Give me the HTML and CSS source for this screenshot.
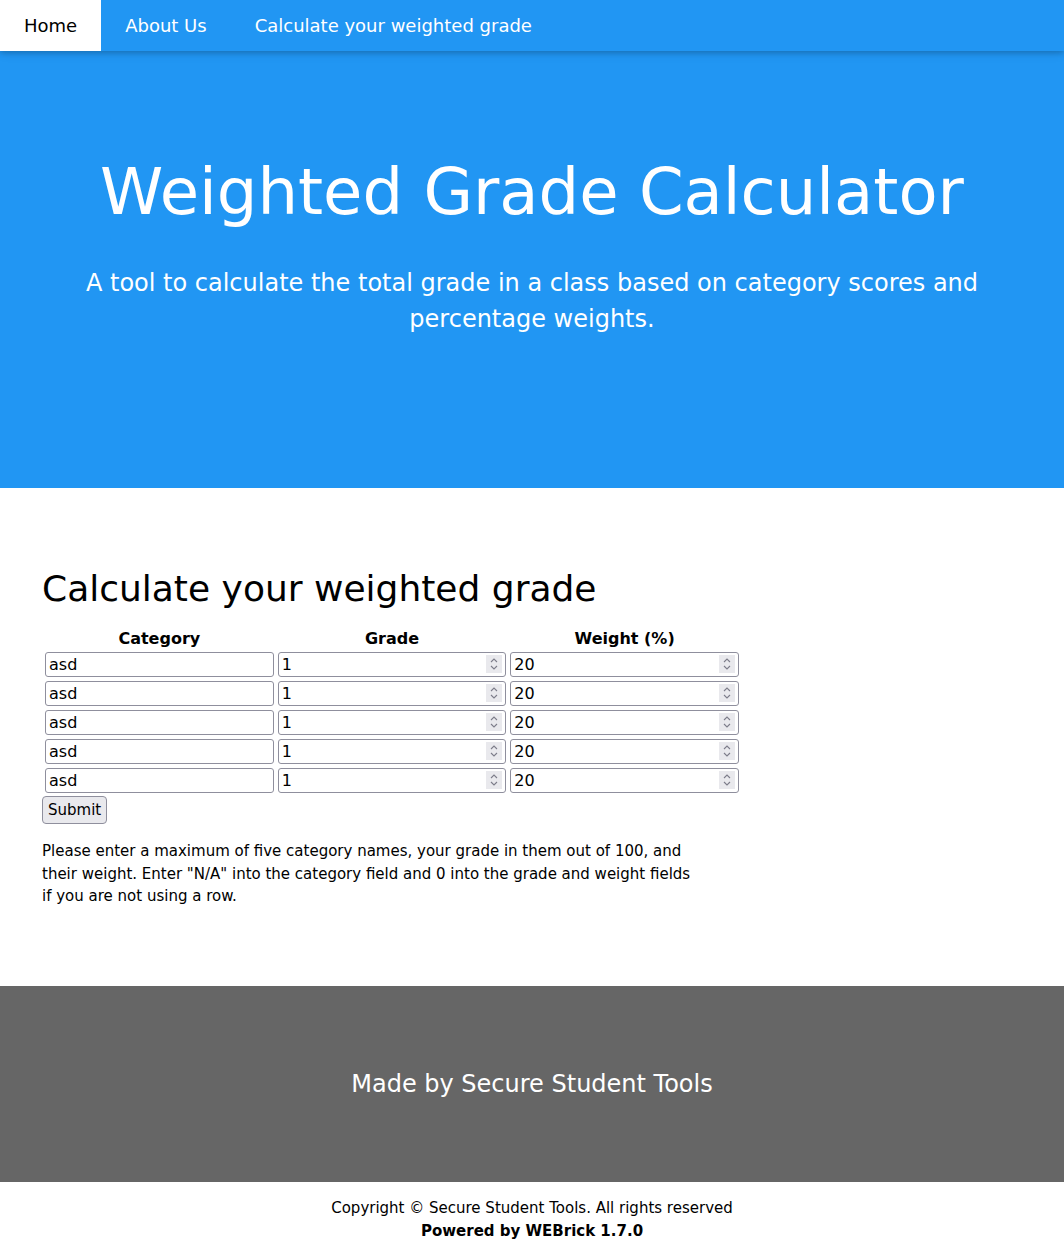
FILE: index.html
```html
<!DOCTYPE html>
<html lang="en">
<head>
<meta charset="utf-8">
<title>Weighted Grade Calculator</title>
<link rel="stylesheet" href="styles.css">
</head>
<body>
<nav class="topbar">
  <a class="nav-item active" href="#">Home</a>
  <a class="nav-item" href="#">About Us</a>
  <a class="nav-item" href="#">Calculate your weighted grade</a>
</nav>
<header class="hero">
  <h1 class="hero-title">Weighted Grade Calculator</h1>
  <p class="hero-sub">A tool to calculate the total grade in a class based on category scores and percentage weights.</p>
</header>
<main class="content">
  <h1 class="section-title">Calculate your weighted grade</h1>
  <form class="grade-form">
    <table class="grade-table">
      <thead>
        <tr><th>Category</th><th>Grade</th><th>Weight (%)</th></tr>
      </thead>
      <tbody>
        <tr>
          <td><input class="field" type="text" value="asd"></td>
          <td class="num"><input class="field" type="number" value="1"><span class="spin"><svg width="16" height="18" viewBox="0 0 16 18"><path d="M5 7 L8 4 L11 7 M5 11 L8 14 L11 11"/></svg></span></td>
          <td class="num"><input class="field" type="number" value="20"><span class="spin"><svg width="16" height="18" viewBox="0 0 16 18"><path d="M5 7 L8 4 L11 7 M5 11 L8 14 L11 11"/></svg></span></td>
        </tr>
        <tr>
          <td><input class="field" type="text" value="asd"></td>
          <td class="num"><input class="field" type="number" value="1"><span class="spin"><svg width="16" height="18" viewBox="0 0 16 18"><path d="M5 7 L8 4 L11 7 M5 11 L8 14 L11 11"/></svg></span></td>
          <td class="num"><input class="field" type="number" value="20"><span class="spin"><svg width="16" height="18" viewBox="0 0 16 18"><path d="M5 7 L8 4 L11 7 M5 11 L8 14 L11 11"/></svg></span></td>
        </tr>
        <tr>
          <td><input class="field" type="text" value="asd"></td>
          <td class="num"><input class="field" type="number" value="1"><span class="spin"><svg width="16" height="18" viewBox="0 0 16 18"><path d="M5 7 L8 4 L11 7 M5 11 L8 14 L11 11"/></svg></span></td>
          <td class="num"><input class="field" type="number" value="20"><span class="spin"><svg width="16" height="18" viewBox="0 0 16 18"><path d="M5 7 L8 4 L11 7 M5 11 L8 14 L11 11"/></svg></span></td>
        </tr>
        <tr>
          <td><input class="field" type="text" value="asd"></td>
          <td class="num"><input class="field" type="number" value="1"><span class="spin"><svg width="16" height="18" viewBox="0 0 16 18"><path d="M5 7 L8 4 L11 7 M5 11 L8 14 L11 11"/></svg></span></td>
          <td class="num"><input class="field" type="number" value="20"><span class="spin"><svg width="16" height="18" viewBox="0 0 16 18"><path d="M5 7 L8 4 L11 7 M5 11 L8 14 L11 11"/></svg></span></td>
        </tr>
        <tr>
          <td><input class="field" type="text" value="asd"></td>
          <td class="num"><input class="field" type="number" value="1"><span class="spin"><svg width="16" height="18" viewBox="0 0 16 18"><path d="M5 7 L8 4 L11 7 M5 11 L8 14 L11 11"/></svg></span></td>
          <td class="num"><input class="field" type="number" value="20"><span class="spin"><svg width="16" height="18" viewBox="0 0 16 18"><path d="M5 7 L8 4 L11 7 M5 11 L8 14 L11 11"/></svg></span></td>
        </tr>
      </tbody>
    </table>
    <button class="submit" type="button">Submit</button>
  </form>
  <p class="note">Please enter a maximum of five category names, your grade in them out of 100, and their weight. Enter "N/A" into the category field and 0 into the grade and weight fields if you are not using a row.</p>
</main>
<footer class="footer">
  <p class="footer-text">Made by Secure Student Tools</p>
</footer>
<div class="legal">
  <div>Copyright © Secure Student Tools. All rights reserved</div>
  <div class="powered">Powered by WEBrick 1.7.0</div>
</div>
</body>
</html>
```

FILE: styles.css
```css
html, body {
  margin: 0;
  padding: 0;
}
body {
  font-family: "DejaVu Sans", Verdana, sans-serif;
  font-size: 15px;
  line-height: 1.5;
  color: #000;
  background: #fff;
}
.topbar {
  position: relative;
  z-index: 2;
  display: flex;
  background: #2196F3;
  box-shadow: 0 2px 5px 0 rgba(0,0,0,0.16), 0 2px 10px 0 rgba(0,0,0,0.12);
}
.nav-item {
  display: block;
  padding: 12px 24px;
  font-size: 18px;
  line-height: 27px;
  color: #fff;
  text-decoration: none;
}
.nav-item.active {
  background: #fff;
  color: #000;
}
.hero {
  background: #2196F3;
  color: #fff;
  text-align: center;
  padding: 77px 16px 127px;
}
.hero-title {
  margin: 16px 0 0;
  font-size: 64px;
  line-height: 96px;
  font-weight: 400;
}
.hero-sub {
  margin: 25px 0 24px;
  font-size: 24px;
  line-height: 36px;
}
.content {
  padding: 64px 42px;
}
.section-title {
  margin: 10px 0;
  font-size: 36px;
  line-height: 54px;
  font-weight: 400;
}
.grade-form {
  margin: 0;
}
.grade-table {
  width: 700px;
  table-layout: fixed;
  border-collapse: separate;
  border-spacing: 2px;
  margin: 0;
  font-size: 16px;
  line-height: normal;
}
.grade-table th {
  padding: 1px;
  font-weight: 700;
  text-align: center;
  line-height: 19px;
}
.grade-table td {
  padding: 1px;
}
.grade-table td.num {
  position: relative;
}
.field {
  display: block;
  width: 100%;
  box-sizing: border-box;
  margin: 0;
  height: 25px;
  font: inherit;
  line-height: normal;
  padding: 0 3px;
  border: 1px solid #8f8f9d;
  border-radius: 3px;
  background: #fff;
  color: #000;
  -moz-appearance: textfield;
  appearance: textfield;
}
.field::-webkit-inner-spin-button,
.field::-webkit-outer-spin-button {
  -webkit-appearance: none;
  margin: 0;
}
.spin {
  position: absolute;
  right: 5px;
  top: 4px;
  width: 16px;
  height: 18px;
  background: #e9e9ed;
  display: block;
}
.spin svg {
  display: block;
  fill: none;
  stroke: #7d7d8a;
  stroke-width: 1.1;
}
.submit {
  display: block;
  margin: 0;
  box-sizing: border-box;
  height: 28px;
  font: inherit;
  line-height: 1.5;
  padding: 0 5px;
  background: #e9e9ed;
  border: 1px solid #8f8f9d;
  border-radius: 4px;
  color: #000;
}
.note {
  margin: 16px 0 14px;
  max-width: 656px;
}
.footer {
  background: #666666;
  color: #fff;
  text-align: center;
  padding: 64px 16px;
}
.footer-text {
  margin: 16px 0;
  font-size: 24px;
  line-height: 36px;
}
.legal {
  text-align: center;
  line-height: 23px;
  padding: 15px 16px 15px;
}
.powered {
  font-weight: 700;
}
```
